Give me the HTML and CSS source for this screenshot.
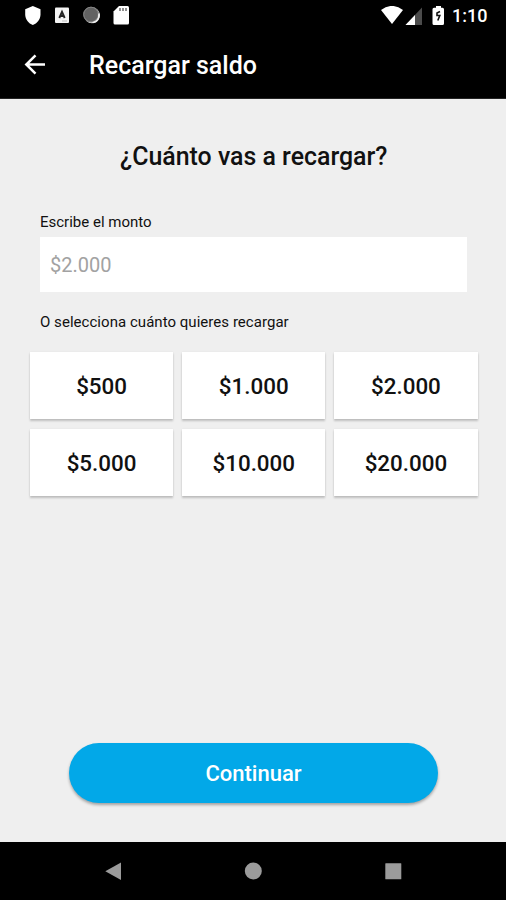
FILE: index.html
```html
<!DOCTYPE html>
<html lang="es">
<head>
<meta charset="utf-8">
<title>Recargar saldo</title>
<link rel="stylesheet" href="styles.css">
</head>
<body>
<div class="status">
  <svg class="status-left" width="110" height="20" viewBox="24 6 110 20">
    <path fill="#fff" d="M32.800 6 40.500 9.200V14.500C40.500 19.500 37 23.400 32.800 25 28.600 23.400 25.200 19.500 25.200 14.500V9.200Z"/>
    <rect x="55" y="7.500" width="14" height="15.500" rx="1" fill="#f4f4f4"/>
    <path d="M59.300 18 62 11.800 64.700 18M60.500 16h3" fill="none" stroke="#222" stroke-width="1.900"/>
    <path d="M62 21h5" stroke="#bbb"/>
    <circle cx="92" cy="15.300" r="8" fill="#ddd"/>
    <circle cx="91" cy="14.500" r="7.800" fill="#626262"/>
    <circle cx="91" cy="14.500" r="7.300" fill="none" stroke="#858585"/>
    <path d="M99 13.500Q99.500 21.500 93 22.500" fill="none" stroke="#eee" stroke-width="1.600"/>
    <path fill="#fff" d="M119 6h8.500q1.500 0 1.500 1.500v15.500q0 1.500-1.500 1.500h-12.500q-1.500 0-1.500-1.500V11.500Z"/>
    <path d="M120 8v3M123 8v3M126 8v3" stroke="#555" stroke-width="1.300"/>
  </svg>
  <svg class="status-right" width="64" height="20" viewBox="380 6 64 20">
    <path fill="#fff" d="M381 10Q392 1.800 403 10L392 24Z"/>
    <path fill="#4b4b4b" d="M422 7.500V25H405.500Z"/>
    <path fill="#fff" d="M415 15V25H405.500Z"/>
    <path fill="#fff" d="M436 6h5v1.800h1.500q1.500 0 1.500 1.500V23.500q0 1.500-1.500 1.500h-8.500q-1.500 0-1.500-1.500V9.300q0-1.500 1.500-1.500h2Z"/>
    <path fill="none" stroke="#111" stroke-width="1.600" d="M440 11.500 437 13v2.500h2.800L437.800 20.500"/>
  </svg>
  <span class="time">1:10</span>
</div>
<header class="appbar">
  <svg class="back" width="24" height="24" viewBox="0 0 24 24"><path d="M22 12.500H3.500M12.500 3.300 3.300 12.500l9.200 9.200" fill="none" stroke="#fff" stroke-width="2.500"/></svg>
  <span class="title">Recargar saldo</span>
</header>
<main class="content">
  <h1 class="question">¿Cuánto vas a recargar?</h1>
  <label class="label" for="amount">Escribe el monto</label>
  <input class="amount" id="amount" type="text" placeholder="$2.000">
  <p class="label choose">O selecciona cuánto quieres recargar</p>
  <div class="options">
    <button class="option">$500</button>
    <button class="option">$1.000</button>
    <button class="option">$2.000</button>
    <button class="option">$5.000</button>
    <button class="option">$10.000</button>
    <button class="option">$20.000</button>
  </div>
  <button class="continue">Continuar</button>
</main>
<nav class="navbar">
  <svg width="18" height="20" viewBox="0 0 18 20"><path fill="#9b9b9b" d="M1.300 10.200 17 1.500V19Z"/></svg>
  <svg width="18" height="20" viewBox="0 0 18 20"><circle cx="9.300" cy="10" r="8.500" fill="#9b9b9b"/></svg>
  <svg width="18" height="20" viewBox="0 0 18 20"><rect x="1.300" y="2.300" width="16" height="16" rx=".5" fill="#9b9b9b"/></svg>
</nav>
</body>
</html>
```
FILE: styles.css
```css
* { box-sizing: border-box; }
body {
  margin: 0;
  width: 506px;
  height: 900px;
  display: flex;
  flex-direction: column;
  overflow: hidden;
  background: #efefef;
  color: #111;
  font-family: Roboto, sans-serif;
}
button, input { font-family: inherit; border: 0; padding: 0; border-radius: 0; }
.status {
  height: 32px;
  flex: none;
  display: flex;
  align-items: flex-start;
  padding: 6px 0 0 24px;
  background: #000;
}
.status svg { flex: none; }
.status-right { margin-left: 246px; }
.time {
  margin-left: 8px;
  color: #fff;
  font-size: 18px;
  line-height: 20px;
  font-weight: 500;
}
.appbar {
  height: 67px;
  flex: none;
  display: flex;
  align-items: center;
  padding: 0 0 2px 23px;
  background: #000;
  border-bottom: 1px solid #242424;
}
.title {
  margin: 4px 0 0 42px;
  color: #fff;
  font-size: 25px;
  line-height: 30px;
  font-weight: 500;
}
.content {
  flex: 1;
  display: flex;
  flex-direction: column;
  padding: 0 28.5px 39px 30px;
}
.question {
  margin: 43px 0 0;
  text-align: center;
  font-size: 24.9px;
  line-height: 30px;
  font-weight: 500;
}
.label {
  margin: 40px 0 0 10px;
  font-size: 15px;
  line-height: 20px;
}
.amount {
  width: 427px;
  height: 55px;
  flex: none;
  margin: 5px 0 0 10px;
  padding: 0 10px;
  background: #fff;
  font-size: 20px;
}
.amount::placeholder { color: #a2a2a2; opacity: 1; }
.choose { margin-top: 20px; letter-spacing: .04px; }
.options {
  margin-top: 20px;
  display: grid;
  grid-template-columns: repeat(3, 1fr);
  grid-auto-rows: 67px;
  gap: 10px 9px;
}
.option {
  background: #fff;
  color: #111;
  font-size: 22.4px;
  font-weight: 500;
  box-shadow: 0 2px 2px rgba(0, 0, 0, .2), 0 0 2px rgba(0, 0, 0, .06);
}
.continue {
  width: 369px;
  height: 60px;
  margin: auto 0 0 39px;
  border-radius: 30px;
  background: #02a8e8;
  color: #fff;
  font-size: 22px;
  font-weight: 500;
  box-shadow: 0 2px 3px rgba(0, 0, 0, .32);
}
.navbar {
  height: 58px;
  flex: none;
  display: flex;
  justify-content: space-between;
  align-items: center;
  padding: 0 104px;
  background: #000;
}
```
